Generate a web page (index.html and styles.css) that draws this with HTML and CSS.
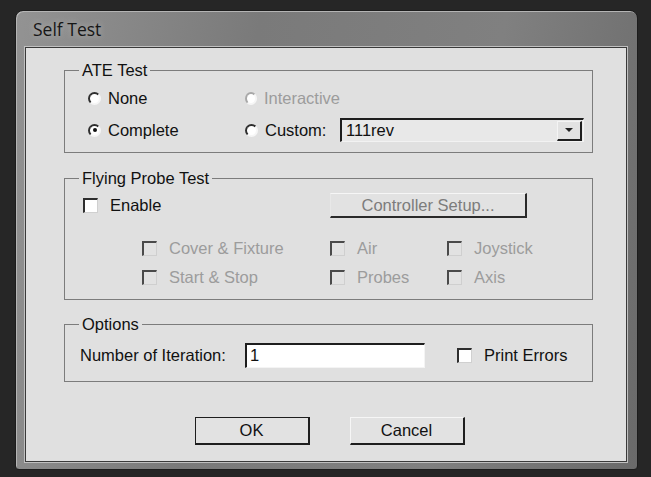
FILE: index.html
```html
<!DOCTYPE html>
<html lang="en">
<head>
    <meta charset="UTF-8">
    <title>Self Test</title>
    <link rel="stylesheet" href="styles.css">
</head>
<body>
    <div class="window">
        <div class="titlebar">Self Test</div>
        <div class="client">

            <!-- ATE test -->
            <fieldset class="group ate">
                <legend>ATE Test</legend>
                <div class="ate-grid">
                    <label class="opt"><span class="radio"></span>None</label>
                    <label class="opt disabled"><span class="radio"></span>Interactive</label>
                    <span></span>
                    <label class="opt"><span class="radio checked"></span>Complete</label>
                    <label class="opt"><span class="radio"></span>Custom:</label>
                    <div class="combo">
                        <span class="combo-text">111rev</span>
                        <span class="combo-btn"><span class="arrow"></span></span>
                    </div>
                </div>
            </fieldset>

            <!-- Flying probe -->
            <fieldset class="group probe">
                <legend>Flying Probe Test</legend>
                <div class="probe-top">
                    <label class="opt wide"><span class="check"></span>Enable</label>
                    <button class="btn disabled-btn">Controller Setup...</button>
                </div>
                <div class="probe-grid">
                    <label class="opt wide disabled"><span class="check"></span>Cover &amp; Fixture</label>
                    <label class="opt wide disabled"><span class="check"></span>Air</label>
                    <label class="opt wide disabled"><span class="check"></span>Joystick</label>
                    <label class="opt wide disabled"><span class="check"></span>Start &amp; Stop</label>
                    <label class="opt wide disabled"><span class="check"></span>Probes</label>
                    <label class="opt wide disabled"><span class="check"></span>Axis</label>
                </div>
            </fieldset>

            <!-- Options -->
            <fieldset class="group options">
                <legend>Options</legend>
                <div class="options-row">
                    <span class="field-label">Number of Iteration:</span>
                    <div class="textbox">1</div>
                    <label class="opt wide print"><span class="check"></span>Print Errors</label>
                </div>
            </fieldset>

            <div class="button-row">
                <button class="btn default-btn">OK</button>
                <button class="btn">Cancel</button>
            </div>
        </div>
    </div>
</body>
</html>
```

FILE: styles.css
```css
body {
    margin: 0;
    padding: 0;
    width: 651px;
    height: 477px;
    overflow: hidden;
    background: #262626;
    font-family: "Liberation Sans", Arial, sans-serif;
    font-size: 16.5px;
    color: #111;
}

.window {
    margin: 10px 0 0 15px;
    width: 623px;
    height: 460px;
    box-sizing: border-box;
    border: 1px solid #1c1c1c;
    border-radius: 8px 8px 4px 4px;
    background: linear-gradient(100deg, #939393 0%, #7a7a7a 35%, #808080 70%, #6a6a6a 100%);
    box-shadow: inset 1px 1px 0 #b4b4b4;
    padding: 0 10px 7px 9px;
    display: flex;
    flex-direction: column;
}

.titlebar {
    height: 36px;
    line-height: 36px;
    padding-left: 8px;
    font-family: "Open Sans", "Noto Sans", sans-serif;
    font-size: 17.5px;
    color: #161616;
    text-shadow: 0 0 6px #b8b8b8;
}

.client {
    flex: 1;
    background: #e0e0e0;
    border: 1px solid #3a3a3a;
    box-shadow: 0 0 0 1px #c0c0c0;
    padding: 0 33px 0 38px;
}

/* group boxes */
.group {
    margin: 0;
    padding: 0;
    border: 1px solid #7c7c7c;
    min-width: 0;
}

.group legend {
    margin-left: 14px;
    padding: 0 3px;
    line-height: 18px;
}

.ate {
    margin-top: 13px;
    padding: 7px 0 10px 0;
}

.probe {
    margin-top: 16px;
    padding: 6px 0 12px 0;
}

.options {
    margin-top: 15px;
    padding: 10px 0 13px 0;
}

.ate-grid {
    margin-left: 23px;
    display: grid;
    grid-template-columns: 157px 95px 244px;
    grid-auto-rows: 24px;
    row-gap: 8px;
    align-items: center;
}

.opt {
    display: flex;
    align-items: center;
    gap: 7px;
    white-space: nowrap;
}

.opt.wide {
    gap: 12px;
}

.disabled {
    color: #9c9c9c;
}

.radio {
    width: 13px;
    height: 13px;
    box-sizing: border-box;
    border-radius: 50%;
    border: 2px solid;
    border-color: #2e2e2e #f6f6f6 #f6f6f6 #2e2e2e;
    background: #fff;
    display: flex;
    align-items: center;
    justify-content: center;
}

.disabled .radio {
    border-color: #a8a8a8 #f6f6f6 #f6f6f6 #a8a8a8;
}

.radio.checked::after {
    content: "";
    width: 4px;
    height: 4px;
    border-radius: 50%;
    background: #111;
}

.check {
    width: 15px;
    height: 15px;
    box-sizing: border-box;
    border-style: solid;
    border-width: 2px 1px 1px 2px;
    border-color: #2e2e2e #d0d0d0 #d0d0d0 #2e2e2e;
    background: #fff;
}

.disabled .check {
    border-color: #4a4a4a #cfcfcf #cfcfcf #4a4a4a;
    background: #e2e2e2;
}

.combo {
    height: 24px;
    box-sizing: border-box;
    border-style: solid;
    border-width: 2px 1px 1px 2px;
    border-color: #1e1e1e #f2f2f2 #f2f2f2 #1e1e1e;
    background: #e8e8e8;
    display: flex;
    align-items: center;
    justify-content: space-between;
}

.combo-text {
    padding-left: 4px;
}

.combo-btn {
    width: 25px;
    height: 20px;
    box-sizing: border-box;
    border-style: solid;
    border-width: 1px 2px 2px 1px;
    border-color: #f4f4f4 #1e1e1e #1e1e1e #f4f4f4;
    background: #e2e2e2;
    display: flex;
    align-items: center;
    justify-content: center;
    margin-right: 1px;
}

.arrow {
    width: 0;
    height: 0;
    border-left: 4px solid transparent;
    border-right: 4px solid transparent;
    border-top: 4px solid #222;
}

/* flying probe */
.probe-top {
    margin-left: 18px;
    display: grid;
    grid-template-columns: 247px 197px;
    height: 25px;
    align-items: center;
}

.probe-grid {
    margin: 20px 0 0 77px;
    display: grid;
    grid-template-columns: 188px 117px auto;
    grid-auto-rows: 20px;
    row-gap: 9px;
    align-items: center;
}

/* buttons */
.btn {
    font-family: "Liberation Sans", Arial, sans-serif;
    font-size: 16.5px;
    color: #111;
    background: #e2e2e2;
    border-style: solid;
    border-width: 1px 2px 2px 1px;
    border-color: #f6f6f6 #1e1e1e #1e1e1e #f6f6f6;
    padding: 0;
    height: 25px;
}

.disabled-btn {
    color: #7c7c7c;
    border-color: #f6f6f6 #2a2a2a #2a2a2a #e8e8e8;
}

.default-btn {
    border-color: #1e1e1e;
}

.button-row {
    margin-top: 35px;
    display: flex;
    justify-content: center;
    gap: 40px;
    padding-left: 2px;
}

.button-row .btn {
    width: 115px;
    height: 28px;
}

/* options */
.options-row {
    margin-left: 15px;
    display: flex;
    align-items: center;
    height: 25px;
}

.field-label {
    width: 165px;
}

.textbox {
    width: 180px;
    height: 25px;
    box-sizing: border-box;
    border-style: solid;
    border-width: 2px 1px 1px 2px;
    border-color: #1e1e1e #f4f4f4 #f4f4f4 #1e1e1e;
    background: #fff;
    padding-left: 3px;
    line-height: 21px;
}

.print {
    margin-left: 32px;
}
```
